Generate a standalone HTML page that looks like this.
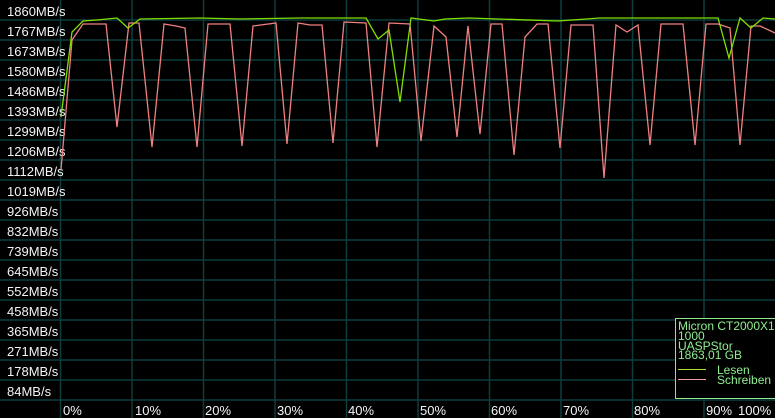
<!DOCTYPE html>
<html><head><meta charset="utf-8"><style>
html,body{margin:0;padding:0;background:#000;width:775px;height:418px;overflow:hidden}
svg{display:block}
text{font-family:"Liberation Sans",Arial,sans-serif}
</style></head><body>
<svg width="775" height="418" viewBox="0 0 775 418" xmlns="http://www.w3.org/2000/svg">
<rect width="775" height="418" fill="#000"/>
<g stroke="#0e3d3d" stroke-width="1.5">
<line x1="0" y1="20" x2="775" y2="20"/><line x1="0" y1="40" x2="775" y2="40"/><line x1="0" y1="60" x2="775" y2="60"/><line x1="0" y1="80" x2="775" y2="80"/><line x1="0" y1="100" x2="775" y2="100"/><line x1="0" y1="120" x2="775" y2="120"/><line x1="0" y1="140" x2="775" y2="140"/><line x1="0" y1="160" x2="775" y2="160"/><line x1="0" y1="180" x2="775" y2="180"/><line x1="0" y1="200" x2="775" y2="200"/><line x1="0" y1="220" x2="775" y2="220"/><line x1="0" y1="240" x2="775" y2="240"/><line x1="0" y1="260" x2="775" y2="260"/><line x1="0" y1="280" x2="775" y2="280"/><line x1="0" y1="300" x2="775" y2="300"/><line x1="0" y1="320" x2="775" y2="320"/><line x1="0" y1="340" x2="775" y2="340"/><line x1="0" y1="360" x2="775" y2="360"/><line x1="0" y1="380" x2="775" y2="380"/><line x1="0" y1="400" x2="775" y2="400"/>
<line x1="60.5" y1="0" x2="60.5" y2="418"/><line x1="132" y1="0" x2="132" y2="418"/><line x1="203.5" y1="0" x2="203.5" y2="418"/><line x1="275" y1="0" x2="275" y2="418"/><line x1="346.5" y1="0" x2="346.5" y2="418"/><line x1="418" y1="0" x2="418" y2="418"/><line x1="489.5" y1="0" x2="489.5" y2="418"/><line x1="561" y1="0" x2="561" y2="418"/><line x1="632.5" y1="0" x2="632.5" y2="418"/><line x1="704" y1="0" x2="704" y2="418"/>
</g>
<g fill="#f4f4f4" font-size="13">
<text x="7" y="16">1860MB/s</text><text x="7" y="36">1767MB/s</text><text x="7" y="56">1673MB/s</text><text x="7" y="76">1580MB/s</text><text x="7" y="96">1486MB/s</text><text x="7" y="116">1393MB/s</text><text x="7" y="136">1299MB/s</text><text x="7" y="156">1206MB/s</text><text x="7" y="176">1112MB/s</text><text x="7" y="196">1019MB/s</text><text x="7" y="216">926MB/s</text><text x="7" y="236">832MB/s</text><text x="7" y="256">739MB/s</text><text x="7" y="276">645MB/s</text><text x="7" y="296">552MB/s</text><text x="7" y="316">458MB/s</text><text x="7" y="336">365MB/s</text><text x="7" y="356">271MB/s</text><text x="7" y="376">178MB/s</text><text x="7" y="396">84MB/s</text>
<text x="63" y="415">0%</text><text x="135" y="415">10%</text><text x="205" y="415">20%</text><text x="277" y="415">30%</text><text x="348" y="415">40%</text><text x="420" y="415">50%</text><text x="491" y="415">60%</text><text x="563" y="415">70%</text><text x="634" y="415">80%</text><text x="706" y="415">90%</text><text x="738" y="415">100%</text>
</g>
<polyline fill="none" stroke="#f08080" stroke-width="1.3" points="61,170 72,40 83,24 106,24 117,127 129,23 139,23 152,147 164,24 176,26 185,28 197,147 208,24 230,24 242,146 253,26 276,23 287,144 298,23 310,25 322,25 333,143 344,22 366,23 377,147 389,23 410,24 421,141 434,26 446,37 457,137 468,26 480,134 491,24 502,24 514,155 525,37 537,24 548,24 560,148 571,25 593,25 604,178 616,25 627,32 638,25 650,145 661,24 683,24 695,145 706,24 718,24 730,28 740,145 751,26 760,26 775,33"/>
<polyline fill="none" stroke="#80e000" stroke-width="1.3" points="61,117 72,32 83,21 97,20 117,18 128,28 140,19 200,18 240,19 300,18 366,18 378,39 389,30 400,102 411,18 434,21 445,19 469,18 558,21 600,18 660,18 718,18 729,58 740,18 751,28 763,18 775,19"/>
<rect x="675.5" y="318.5" width="100" height="80" fill="#000" stroke="#8ee88e" stroke-width="1"/>
<g fill="#90ee90" font-size="12">
<text x="678" y="330">Micron CT2000X10</text><text x="678" y="340">1000</text><text x="678" y="350">UASPStor</text><text x="678" y="359">1863,01 GB</text>
<text x="717" y="374">Lesen</text><text x="717" y="384">Schreiben</text>
</g>
<line x1="678" y1="369.5" x2="706" y2="369.5" stroke="#a0e030"/>
<line x1="678" y1="379.5" x2="706" y2="379.5" stroke="#f0a0a0"/>
</svg>
</body></html>
